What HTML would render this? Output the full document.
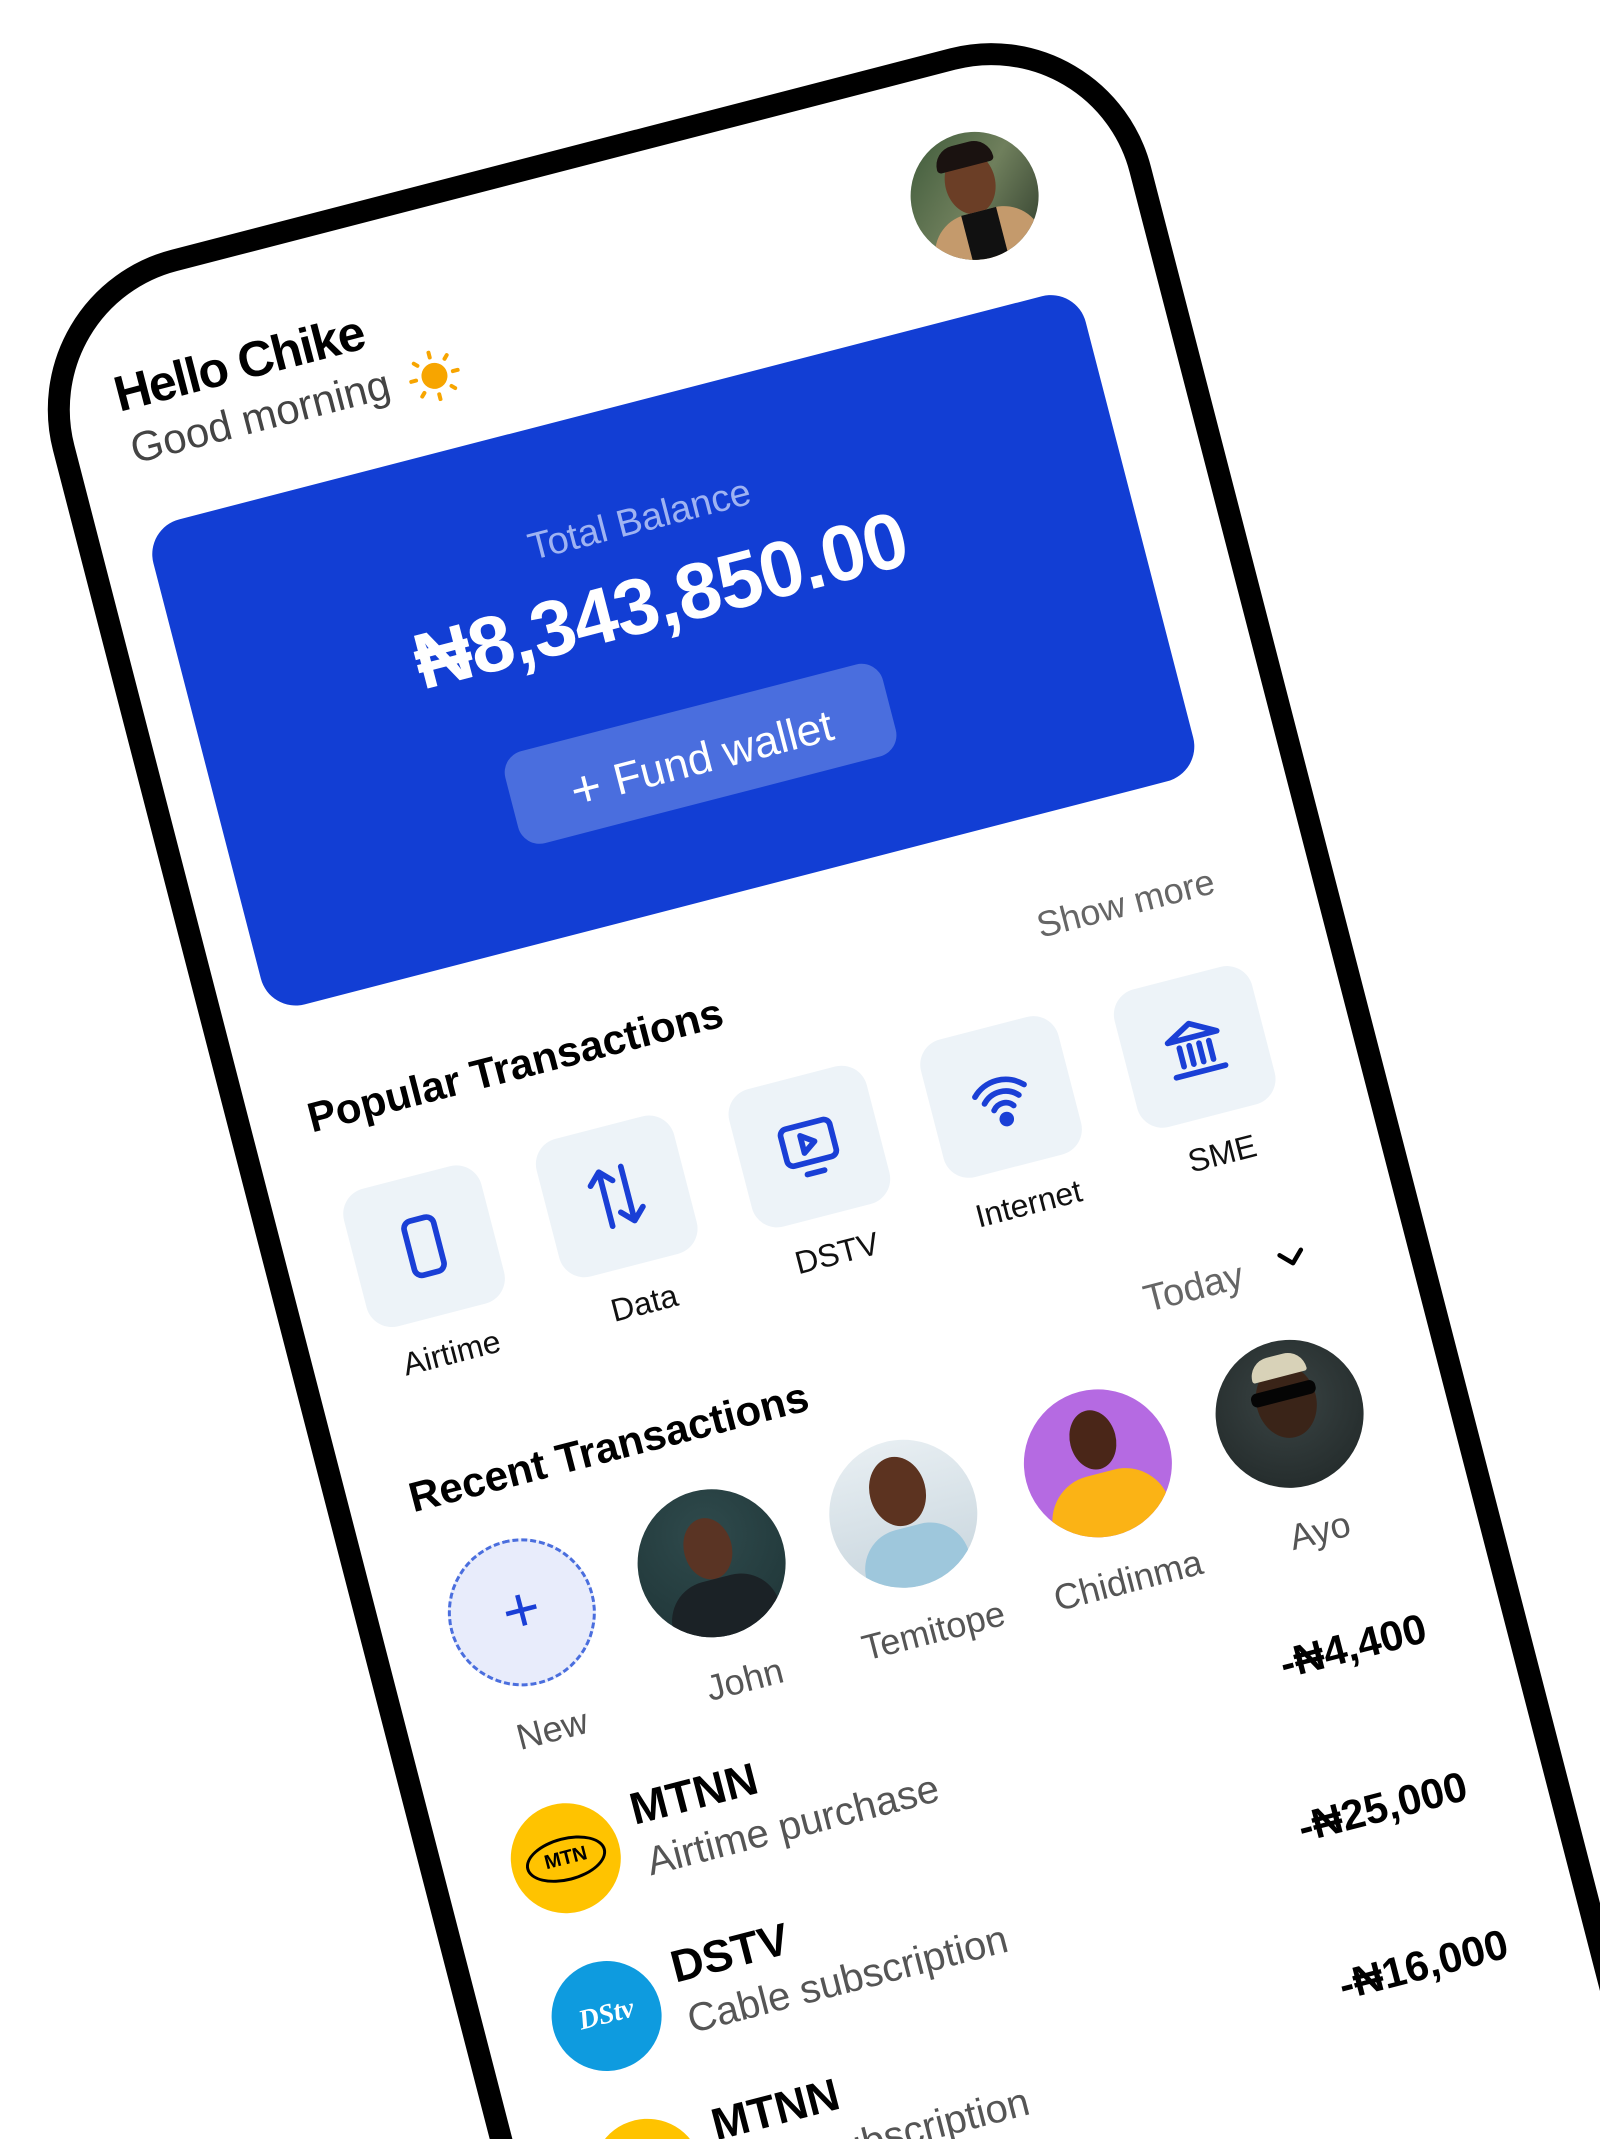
<!DOCTYPE html>
<html><head><meta charset="utf-8">
<style>
html{overflow:hidden;width:1600px;height:2139px;}
html,body{margin:0;padding:0;background:#fff;}
body{width:1600px;height:2139px;overflow:hidden;position:relative;font-family:"Liberation Sans","DejaVu Sans",sans-serif;}
#w{position:absolute;left:150px;top:530px;transform-origin:0 0;transform:rotate(-14.5deg);}
#w div{position:absolute;}
.ph{left:-74px;top:-266px;width:1090px;height:2600px;border:22px solid #000;border-radius:165px;background:#fff;}
.t{white-space:nowrap;line-height:1;}
.card{left:-5px;top:-3px;width:963px;height:501px;border-radius:36px;background:#123ed4;}
.tile{width:142px;height:142px;border-radius:26px;background:#edf3f8;top:691px;}
.tile svg{position:absolute;left:33px;top:33px;}
.lbl{width:200px;text-align:center;font-size:32px;color:#111;top:856px;}
.av{width:148px;height:148px;border-radius:50%;top:1067px;overflow:hidden;}
.cl{width:200px;text-align:center;font-size:36px;color:#555;top:1244px;}
.logo{left:15px;width:110px;height:110px;border-radius:50%;}
.tt{left:145px;font-size:45px;font-weight:bold;color:#000;}
.st{left:148px;font-size:40px;color:#555;}
.amt{font-size:42px;font-weight:bold;color:#000;text-align:right;width:400px;left:560px;}
</style></head><body>
<div id="w">
<div class="ph"></div>
<div class="t" style="left:0;top:-164px;font-size:50px;font-weight:bold;letter-spacing:-1.5px;color:#000;">Hello Chike</div>
<div class="t" style="left:2px;top:-103px;font-size:42px;color:#444;">Good morning</div>
<div style="left:288px;top:-104px;width:52px;height:52px;">
<svg width="52" height="52" viewBox="0 0 52 52"><circle cx="26" cy="26" r="13" fill="#f7a500"/><g stroke="#f7a500" stroke-width="4" stroke-linecap="round"><line x1="26" y1="2" x2="26" y2="7"/><line x1="26" y1="45" x2="26" y2="50"/><line x1="2" y1="26" x2="7" y2="26"/><line x1="45" y1="26" x2="50" y2="26"/><line x1="9" y1="9" x2="12" y2="12"/><line x1="40" y1="40" x2="43" y2="43"/><line x1="9" y1="43" x2="12" y2="40"/><line x1="40" y1="12" x2="43" y2="9"/></g></svg></div>
<div style="left:818px;top:-181px;width:128px;height:128px;border-radius:50%;overflow:hidden;background:linear-gradient(135deg,#3e5a3a,#6f7f5c 50%,#2d3a2a);">
<div style="left:38px;top:18px;width:50px;height:64px;border-radius:50%;background:#6b3e26;"></div>
<div style="left:34px;top:10px;width:58px;height:24px;border-radius:30px 30px 6px 6px;background:#1a1210;"></div>
<div style="left:10px;top:80px;width:110px;height:70px;border-radius:40px 40px 0 0;background:#c49a6c;"></div>
<div style="left:46px;top:80px;width:36px;height:60px;background:#111;"></div></div>
<div class="card"></div>
<div class="t" style="left:-5px;width:963px;text-align:center;top:94px;font-size:38px;color:#9fb3f2;">Total Balance</div>
<div class="t" style="left:-5px;width:963px;text-align:center;top:156px;font-size:79px;font-weight:bold;color:#fff;letter-spacing:-1px;">₦8,343,850.00</div>
<div style="left:282px;top:307px;width:390px;height:95px;border-radius:22px;background:#4a6ede;"></div>
<div class="t" style="left:282px;width:390px;text-align:center;top:334px;font-size:44px;color:#fff;"><span style="font-size:52px;vertical-align:-3px;margin-right:14px;">+</span>Fund wallet</div>
<div class="t" style="left:760px;top:588px;font-size:36px;color:#666;">Show more</div>
<div class="t" style="left:6px;top:589px;font-size:42px;font-weight:bold;color:#000;">Popular Transactions</div>
<div class="tile" style="left:15px;"><svg width="76" height="76" viewBox="0 0 60 60"><rect x="18" y="8" width="24" height="44" rx="6" fill="none" stroke="#1a3fd6" stroke-width="4.5"/></svg></div>
<div class="tile" style="left:214px;"><svg width="76" height="76" viewBox="0 0 60 60" fill="none" stroke="#1a3fd6" stroke-width="4.5" stroke-linecap="round" stroke-linejoin="round"><path d="M21 52V8M12 17l9-9 9 9M39 8v44M30 43l9 9 9-9"/></svg></div>
<div class="tile" style="left:413px;"><svg width="76" height="76" viewBox="0 0 60 60" fill="none" stroke="#1a3fd6" stroke-width="4.5" stroke-linecap="round" stroke-linejoin="round"><rect x="10" y="12" width="40" height="30" rx="5"/><path d="M25 20v14l10-7z"/><path d="M23 51h14"/></svg></div>
<div class="tile" style="left:611px;"><svg width="76" height="76" viewBox="0 0 60 60" fill="none" stroke="#1a3fd6" stroke-width="4.5" stroke-linecap="round"><path d="M10 25a28 28 0 0 1 40 0M16 32a19 19 0 0 1 28 0M22 39a10 10 0 0 1 16 0"/><circle cx="30" cy="48" r="3.5" fill="#1a3fd6"/></svg></div>
<div class="tile" style="left:811px;"><svg width="76" height="76" viewBox="0 0 60 60" fill="none" stroke="#1a3fd6" stroke-width="4.5" stroke-linecap="round" stroke-linejoin="round"><path d="M10 22L30 11l20 11z"/><path d="M18 28v15M26 28v15M34 28v15M42 28v15M10 50h40"/></svg></div>
<div class="t lbl" style="left:-14px;">Airtime</div>
<div class="t lbl" style="left:185px;">Data</div>
<div class="t lbl" style="left:384px;">DSTV</div>
<div class="t lbl" style="left:582px;">Internet</div>
<div class="t lbl" style="left:782px;">SME</div>
<div class="t" style="left:770px;top:976px;font-size:38px;color:#666;">Today</div>
<div style="left:908px;top:980px;"><svg width="30" height="22" viewBox="0 0 30 22"><path d="M4 5l11 11L26 5" fill="none" stroke="#000" stroke-width="4.5" stroke-linecap="round" stroke-linejoin="round"/></svg></div>
<div class="t" style="left:9px;top:982px;font-size:42px;font-weight:bold;color:#000;">Recent Transactions</div>
<div class="av" style="left:15px;background:#e8ecfb;border:3px dashed #4a6ede;width:142px;height:142px;"><div class="t" style="left:0;width:142px;text-align:center;top:36px;font-size:64px;color:#1a3fd6;font-weight:300;">+</div></div>
<div class="av" style="left:211px;background:radial-gradient(circle at 50% 30%,#2f4a4c,#1e3436);"><div style="left:50px;top:28px;width:48px;height:62px;border-radius:50%;background:#5a3424;"></div><div style="left:20px;top:90px;width:110px;height:70px;border-radius:40px 40px 0 0;background:#1b2226;"></div></div>
<div class="av" style="left:409px;background:linear-gradient(#e7eef2,#c9d6de);"><div style="left:46px;top:16px;width:56px;height:70px;border-radius:50%;background:#5c3320;"></div><div style="left:22px;top:88px;width:106px;height:70px;border-radius:40px 40px 0 0;background:#9ec7dc;"></div></div>
<div class="av" style="left:610px;background:#b56ae2;"><div style="left:52px;top:20px;width:46px;height:60px;border-radius:50%;background:#4a2618;"></div><div style="left:14px;top:84px;width:120px;height:70px;border-radius:46px 46px 0 0;background:#fbb315;"></div></div>
<div class="av" style="left:808px;background:radial-gradient(circle at 50% 40%,#3a4444,#1f2626);"><div style="left:44px;top:24px;width:60px;height:74px;border-radius:50%;background:#3a2418;"></div><div style="left:46px;top:14px;width:56px;height:22px;border-radius:30px 30px 4px 4px;background:#d8d2b8;"></div><div style="left:40px;top:46px;width:66px;height:14px;border-radius:6px;background:#050505;"></div></div>
<div class="t cl" style="left:-11px;">New</div>
<div class="t cl" style="left:188px;">John</div>
<div class="t cl" style="left:383px;">Temitope</div>
<div class="t cl" style="left:584px;">Chidinma</div>
<div class="t cl" style="left:782px;">Ayo</div>

<div class="logo" style="top:1335px;background:#ffc300;"><div style="left:14px;top:34px;width:76px;height:38px;border:3px solid #000;border-radius:50%;"></div><div class="t" style="left:0;width:110px;text-align:center;top:45px;font-size:20px;font-weight:bold;color:#000;">MTN</div></div>
<div class="t tt" style="top:1337px;">MTNN</div>
<div class="t st" style="top:1395px;">Airtime purchase</div>
<div class="t amt" style="top:1361px;">-₦4,400</div>

<div class="logo" style="top:1498px;background:#0e9bdf;"><div class="t" style="left:0;width:110px;text-align:center;top:40px;font-size:28px;font-weight:bold;font-style:italic;color:#fff;font-family:'Liberation Serif',serif;">DStv</div></div>
<div class="t tt" style="top:1500px;">DSTV</div>
<div class="t st" style="top:1558px;">Cable subscription</div>
<div class="t amt" style="top:1524px;">-₦25,000</div>

<div class="logo" style="top:1661px;background:#ffc300;"></div>
<div class="t tt" style="top:1663px;">MTNN</div>
<div class="t st" style="top:1721px;">Data subscription</div>
<div class="t amt" style="top:1687px;">-₦16,000</div>
</div>
</body></html>
